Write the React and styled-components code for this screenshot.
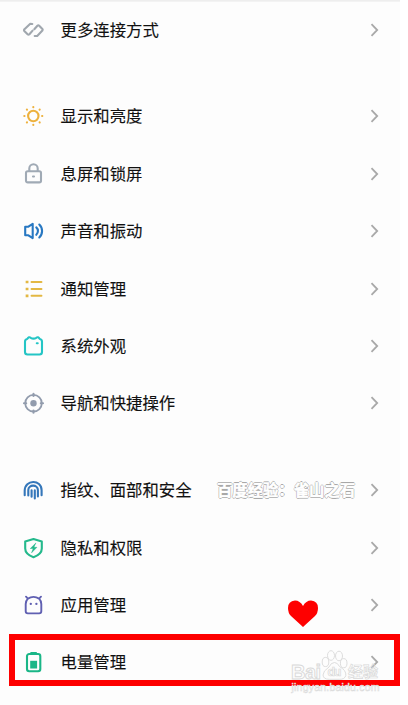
import styled, { createGlobalStyle } from "styled-components"

const GlobalStyle = createGlobalStyle`
    body {
        margin: 0;
        background-color: #fff;
        font-family: "Noto Sans CJK SC", "Noto Sans", sans-serif;
    }
`

const Screen = styled.div`
    position: relative;
    box-sizing: border-box;
    width: 400px;
    height: 705px;
    overflow: hidden;
    background-color: #fdfdfd;
    border-top: 1px solid #eee;
    box-shadow: inset 0 1px #f3f3f3;
`

const Group = styled.div`
    display: flex;
    flex-direction: column;
    margin-bottom: 29.4px;
`

const Row = styled.div`
    display: flex;
    align-items: center;
    box-sizing: border-box;
    height: 57.4px;
    padding: 0 20px 0 21px;
`

const Icon = styled.svg`
    flex: none;
    width: 24px;
    height: 24px;
    margin-right: 15.5px;
    fill: none;
    stroke: ${(props) => props.$color};
    color: ${(props) => props.$color};
    stroke-width: 2.1;
    stroke-linecap: round;
    stroke-linejoin: round;
`

const Label = styled.span`
    flex: 1;
    padding-bottom: 2px;
    color: #111;
    font-size: 16.4px;
    line-height: 24px;
    white-space: nowrap;
    -webkit-text-stroke: 0.12px #111;
`

const Chevron = styled.svg`
    flex: none;
    width: 10px;
    height: 14px;
    fill: none;
    stroke: #a9a9a9;
    stroke-width: 1.8;
`

const Frame = styled.div`
    position: absolute;
    box-sizing: border-box;
    left: 9px;
    top: 633px;
    width: 391px;
    height: 52px;
    border: 6px solid #fe0000;
`

const Heart = styled.svg`
    position: absolute;
    left: 287px;
    top: 598px;
    width: 32px;
    height: 30px;
    fill: #fe0000;
`

const Credit = styled.span`
    position: absolute;
    left: 217px;
    top: 477px;
    color: #fff;
    font-size: 15.35px;
    font-weight: 700;
    line-height: 22px;
    white-space: nowrap;
    -webkit-text-stroke: 0.6px #fff;
    text-shadow: 0.8px 0 #999, -0.8px 0 #999, 0 0.8px #999, 0 -0.8px #999;
`

const Brand = styled.svg`
    position: absolute;
    left: 288px;
    top: 644px;
    width: 100px;
    height: 50px;
    fill: none;
    stroke: #d9d9d9;
    stroke-width: 0.9;
    font-family: "Liberation Sans", "Noto Sans CJK SC", sans-serif;
    font-weight: bold;
`

const icons = {
    link: (
        <Icon $color="#a0a7ae" viewBox="0 0 24 24">
            <path d="M11.3 6 L9 5.9 L3.2 11.4 Q2.7 12.2 3.3 13 L6.6 16.3 Q7.5 17.2 8.4 16.3 L11.6 12.6" />
            <path d="M13.3 11.2 L16.4 7.7 Q17.3 6.8 18.2 7.7 L21.4 11 Q22 11.8 21.4 12.6 L16.2 17.9 L13.7 18" />
        </Icon>
    ),
    sun: (
        <Icon $color="#edb13d" viewBox="0 0 24 24">
            <circle cx="12.3" cy="12" r="5.2" />
            <path d="M12.3 3v.2M12.3 20.8v.2M3.3 12h.2M21.1 12h.2M5.9 5.6l.1.1M18.6 18.3l.1.1M5.9 18.4l.1-.1M18.6 5.7l.1-.1" />
        </Icon>
    ),
    lock: (
        <Icon $color="#a0aab5" viewBox="0 0 24 24">
            <rect x="5" y="9.2" width="15" height="11.2" rx="1.7" />
            <path d="M8.3 9V6.4a4.2 4.2 0 0 1 8.4 0V9M12 14.5h1" />
        </Icon>
    ),
    sound: (
        <Icon $color="#2878c2" viewBox="0 0 24 24">
            <path d="M4.2 7.7h3.2l4.3-2.8v14.2l-4.3-2.8H4.2z" />
            <path d="M15.3 8.4a5 5 0 0 1 0 7.4M18.3 5.5a9 9 0 0 1 0 13" />
        </Icon>
    ),
    list: (
        <Icon $color="#e3b843" viewBox="0 0 24 24">
            <path strokeWidth="1.9" d="M10.5 5h10M10.5 12h10M10.5 18.8h10" />
            <path strokeWidth="2.7" strokeLinecap="square" d="M6 5h.1M6 12h.1M6 18.8h.1" />
        </Icon>
    ),
    look: (
        <Icon $color="#24c5c5" viewBox="0 0 24 24">
            <path d="M6.2 5 Q8 2.3 9.7 3.8 Q12.5 5.4 15.3 3.8 Q17 2.3 18.8 5 Q21 5.3 21 7.8 V18 Q21 20.5 18.5 20.5 H6.5 Q4 20.5 4 18 V7.8 Q4 5.3 6.2 5z" />
            <path d="M15.8 9.2h.9" />
        </Icon>
    ),
    target: (
        <Icon $color="#929cad" viewBox="0 0 24 24">
            <circle cx="12.5" cy="12.2" r="8.3" strokeWidth="1.8" />
            <circle cx="12.5" cy="12.2" r="3.2" fill="currentColor" stroke="none" />
            <path d="M12.5 2.7v2.2M12.5 19.5v2.2M3 12.2h2.2M19.8 12.2h2.2" />
        </Icon>
    ),
    finger: (
        <Icon $color="#3577ba" viewBox="0 0 24 24">
            <path d="M3.7 17.2v-4.4C3.7 1.2 20.6 1 20.6 12.2v5" />
            <path d="M7.3 17.5v-5.4c0-6 9.6-5.9 9.6 0v6.4M10.6 12.2v6.6M13.8 12.2v8.3" />
        </Icon>
    ),
    shield: (
        <Icon $color="#24b98c" viewBox="0 0 24 24">
            <path d="M12.5 3 L20.8 5.5 V12.5 C20.8 16.5 17.5 19.4 12.5 21.2 C7.5 19.4 4.2 16.5 4.2 12.5 V5.5z" />
            <path fill="currentColor" strokeWidth=".5" d="M14.7 7.2 L9.3 12.5 h2.9 l-1.6 4.3 5.3-5.5h-2.9z" />
        </Icon>
    ),
    robot: (
        <Icon $color="#6060b2" viewBox="0 0 24 24">
            <path strokeWidth="1.9" d="M5 3.7l1.9 1.9Q12.5 2.2 18.1 5.6l1.9-1.9M6.9 5.6Q4.7 7.8 4.7 11v7.3q0 2.1 2.1 2.1h11.4q2.1 0 2.1-2.1V11q0-3.2-2.2-5.4" />
            <path strokeWidth="2.3" d="M9.8 10.8v.1M15.4 10.8v.1" />
        </Icon>
    ),
    battery: (
        <Icon $color="#1ab687" viewBox="0 0 24 24">
            <rect x="6" y="4" width="13.3" height="17.3" rx="2.2" />
            <path d="M10.2 3.1h4.8" />
            <rect x="9.2" y="10.8" width="6.9" height="7.7" fill="currentColor" stroke="none" />
        </Icon>
    ),
}

const groups = [
    [{ icon: "link", text: "更多连接方式" }],
    [
        { icon: "sun", text: "显示和亮度" },
        { icon: "lock", text: "息屏和锁屏" },
        { icon: "sound", text: "声音和振动" },
        { icon: "list", text: "通知管理" },
        { icon: "look", text: "系统外观" },
        { icon: "target", text: "导航和快捷操作" },
    ],
    [
        { icon: "finger", text: "指纹、面部和安全" },
        { icon: "shield", text: "隐私和权限" },
        { icon: "robot", text: "应用管理" },
        { icon: "battery", text: "电量管理" },
    ],
]

const SettingRow = ({ icon, text }) => {
    return (
        <Row>
            {icons[icon]}
            <Label>{text}</Label>
            <Chevron viewBox="0 0 10 14">
                <path d="M1.5 1.2 L7.2 7 L1.5 12.8" />
            </Chevron>
        </Row>
    )
}

const App = () => {
    return (
        <>
            <GlobalStyle />
            <Screen>
                {groups.map((rows, i) => (
                    <Group key={i}>
                        {rows.map((row) => (
                            <SettingRow key={row.icon} {...row} />
                        ))}
                    </Group>
                ))}
                <Credit>百度经验：雀山之石</Credit>
                <Heart viewBox="0 0 32 30">
                    <path d="M16 28 L4 17 Q1 14 1 9 Q1 2 8 1.5 Q13 1.5 16 7 Q19 1.5 24 1.5 Q31 2 31 9 Q31 14 28 17z" />
                </Heart>
                <Brand viewBox="0 0 100 50">
                    <text x="3" y="33.5" fontSize="20" textLength="30">Bai</text>
                    <ellipse cx="37.5" cy="17" rx="3.3" ry="4.6" />
                    <ellipse cx="43" cy="10.5" rx="3.5" ry="4.8" />
                    <ellipse cx="51" cy="11" rx="3.5" ry="4.8" />
                    <ellipse cx="55.7" cy="18.2" rx="3.3" ry="4.6" />
                    <path d="M46.5 17.5q3 0 5 4 7 4 6.3 9-1 4-6.5 3.8h-10q-6 0-6.3-4.3 0-4 6-8 2-4.5 5.5-4.5z" />
                    <text x="39.5" y="31" fontSize="12.5" strokeWidth=".7" textLength="14">du</text>
                    <text x="60" y="32" fontSize="15" strokeWidth=".7" textLength="30">经验</text>
                </Brand>
                <Frame />
                <Brand viewBox="0 0 100 50">
                    <text x="3.5" y="46" fontSize="10.5" fontWeight="normal" fill="#fff" strokeWidth=".5" textLength="88">jingyan.baidu.com</text>
                </Brand>
            </Screen>
        </>
    )
}

export default App
